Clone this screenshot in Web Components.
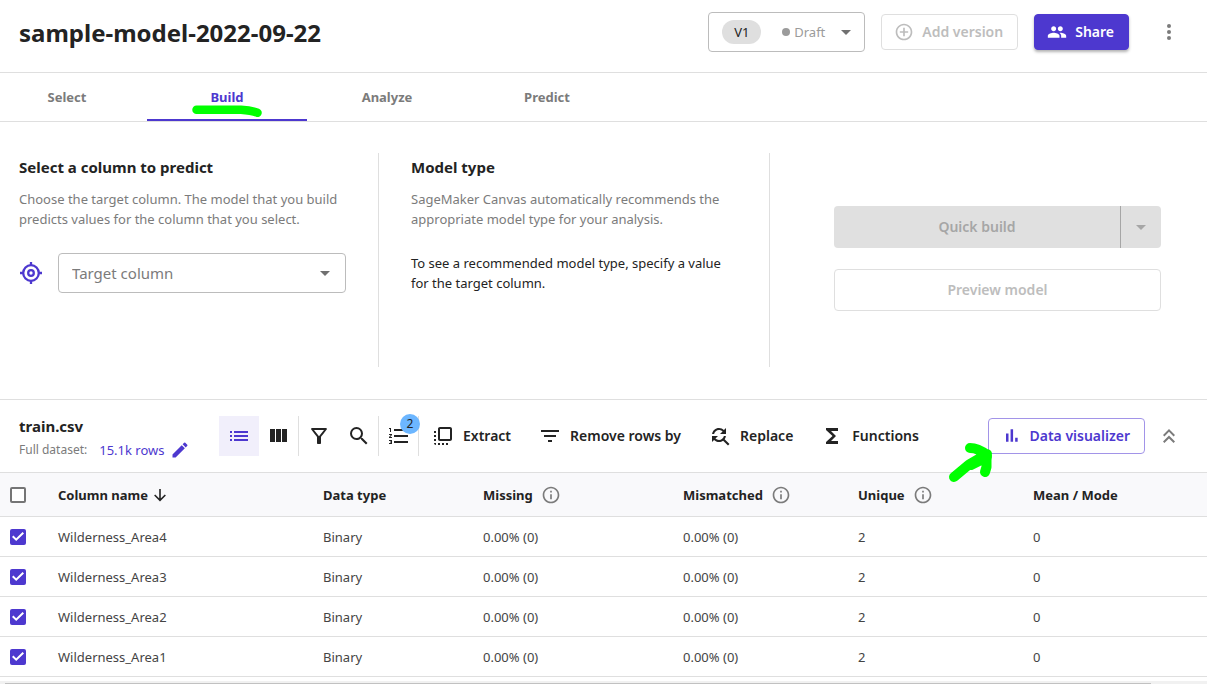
<!DOCTYPE html>
<html lang="en">
<head>
<meta charset="utf-8">
<meta name="viewport" content="width=device-width, initial-scale=1">
<title>sample-model-2022-09-22</title>
<style>
  body {
    margin: 0;
    background: #fff;
    color: #232323;
    font: 400 13px/20px "Noto Sans", "Open Sans", sans-serif;
    --accent: #4d38cf;
    --ink: #232323;
    --muted: #7b7b7b;
    --line: #dfdfdf;
  }
</style>
</head>
<body>
<canvas-app></canvas-app>

<script>
const define = (name, html, setup) => {
  const template = document.createElement('template');
  template.innerHTML = html;
  customElements.define(name, class extends HTMLElement {
    constructor() {
      super();
      this.attachShadow({ mode: 'open' }).append(template.content.cloneNode(true));
    }
    connectedCallback() {
      if (setup && !this.ready) { this.ready = true; setup(this, this.shadowRoot); }
    }
  });
};

const ICONS = {
  people: '<path d="M16 11c1.66 0 2.99-1.34 2.99-3S17.66 5 16 5s-3 1.34-3 3 1.34 3 3 3zm-8 0c1.66 0 2.99-1.34 2.99-3S9.66 5 8 5 5 6.34 5 8s1.34 3 3 3zm0 2c-2.33 0-7 1.17-7 3.5V19h14v-2.5c0-2.33-4.67-3.5-7-3.5zm8 0c-.29 0-.62.02-.97.05 1.16.84 1.97 1.97 1.97 3.45V19h6v-2.5c0-2.33-4.67-3.5-7-3.5z"/>',
  add: '<path d="M13 7h-2v4H7v2h4v4h2v-4h4v-2h-4V7zm-1-5C6.48 2 2 6.48 2 12s4.48 10 10 10 10-4.48 10-10S17.52 2 12 2zm0 18c-4.41 0-8-3.59-8-8s3.59-8 8-8 8 3.59 8 8-3.59 8-8 8z"/>',
  more: '<circle cx="12" cy="6" r="2"/><circle cx="12" cy="12" r="2"/><circle cx="12" cy="18" r="2"/>',
  caret: '<path d="M7 10l5 5 5-5z"/>',
  target: '<g fill="none" stroke="currentColor" stroke-width="2.3"><circle cx="12" cy="12" r="7.8"/><circle cx="12" cy="12" r="2.8"/><path d="M12 1v3M12 20v3M1 12h3M20 12h3"/></g>',
  edit: '<path d="M3 17.25V21h3.75L17.81 9.94l-3.75-3.75L3 17.25zM20.71 7.04a1 1 0 0 0 0-1.41l-2.34-2.34a1 1 0 0 0-1.41 0l-1.83 1.83 3.75 3.75 1.83-1.83z"/>',
  list: '<path d="M3 7h2v2H3zM3 11h2v2H3zM3 15h2v2H3zM7 7h14v2H7zM7 11h14v2H7zM7 15h14v2H7z"/>',
  columns: '<path d="M3 5h5v13H3zM9 5h5v13H9zM15 5h5v13h-5z"/>',
  filter: '<path d="M7 6h10l-5.01 6.3L7 6zm-2.75-.39C6.27 8.2 10 13 10 13v6c0 .55.45 1 1 1h2c.55 0 1-.45 1-1v-6s3.72-4.8 5.74-7.39c.51-.66.04-1.61-.79-1.61H5.04c-.83 0-1.3.95-.79 1.61z"/>',
  search: '<path d="M15.5 14h-.79l-.28-.27A6.47 6.47 0 0 0 16 9.5 6.5 6.5 0 1 0 9.5 16c1.61 0 3.09-.59 4.23-1.57l.27.28v.79l5 4.99L20.49 19l-4.99-5zm-6 0C7.01 14 5 11.99 5 9.5S7.01 5 9.5 5 14 7.01 14 9.5 11.99 14 9.5 14z"/>',
  numbered: '<path d="M2 17h2v.5H3v1h1v.5H2v1h3v-4H2v1zm1-9h1V4H2v1h1v3zm-1 3h1.8L2 13.1v.9h3v-1H3.2L5 10.9V10H2v1zm5-6v2h14V5H7zm0 14h14v-2H7v2zm0-6h14v-2H7v2z"/>',
  extract: '<path d="M3 13h2v-2H3v2zm0 4h2v-2H3v2zm2 4v-2H3c0 1.1.89 2 2 2zM3 9h2V7H3v2zm12 12h2v-2h-2v2zm4-18H9c-1.11 0-2 .9-2 2v10c0 1.1.89 2 2 2h10c1.1 0 2-.9 2-2V5c0-1.1-.9-2-2-2zm0 12H9V5h10v10zm-8 6h2v-2h-2v2zm-4 0h2v-2H7v2z"/>',
  rows: '<path d="M10 18h4v-2h-4v2zM3 6v2h18V6H3zm3 7h12v-2H6v2z"/>',
  replace: '<path d="M11 6c1.38 0 2.63.56 3.54 1.46L12 10h6V4l-2.05 2.05C14.68 4.78 12.93 4 11 4c-3.53 0-6.43 2.61-6.92 6H6.1c.46-2.28 2.48-4 4.9-4zm5.64 9.14c.66-.9 1.12-1.97 1.28-3.14H15.9c-.46 2.28-2.48 4-4.9 4-1.38 0-2.63-.56-3.54-1.46L10 12H4v6l2.05-2.05C7.32 17.22 9.07 18 11 18c1.55 0 2.98-.51 4.14-1.36L20 21.49 21.49 20l-4.85-4.86z"/>',
  sigma: '<path d="M18 4H6v2l6.5 6L6 18v2h12v-3h-7l5-5-5-5h7z"/>',
  bars: '<path d="M6 9h3v10H6zM11.500 4h3v15h-3zM17 14h3v5h-3z"/>',
  collapse: '<path d="M6 17.59 7.41 19 12 14.42 16.59 19 18 17.59l-6-6zM6 11l1.41 1.41L12 7.83l4.59 4.58L18 11l-6-6z"/>',
  info: '<path d="M11 7h2v2h-2zm0 4h2v6h-2zm1-9C6.48 2 2 6.48 2 12s4.48 10 10 10 10-4.48 10-10S17.52 2 12 2zm0 18c-4.41 0-8-3.59-8-8s3.59-8 8-8 8 3.59 8 8-3.59 8-8 8z"/>',
  down: '<path fill="none" stroke="currentColor" stroke-width="2.4" d="M12 3v17M4 12l8 8 8-8"/>'
};

define('ui-icon', `
  <style>
    :host { display: inline-flex; flex: none; width: 24px; height: 24px; }
    :host([size="small"]) { width: 20px; height: 20px; }
    :host([size="tiny"]) { width: 16px; height: 16px; }
    svg { width: 100%; height: 100%; fill: currentColor; }
  </style>
  <svg viewBox="0 0 24 24" aria-hidden="true"></svg>`,
  (el, root) => { root.querySelector('svg').innerHTML = ICONS[el.getAttribute('name')]; });

define('ui-button', `
  <style>
    :host { display: block; flex: none; }
    button {
      box-sizing: border-box; width: 100%; height: 36px; margin: 0; padding: 0 14px 0 12px;
      display: flex; align-items: center; justify-content: center; gap: 8px;
      border: 1px solid var(--line); border-radius: 4px; background: none;
      color: inherit; font: 600 14px/20px "Noto Sans", "Open Sans", sans-serif; white-space: nowrap;
    }
    :host([variant="primary"]) button {
      background: var(--accent); border-color: var(--accent); color: #fff;
      box-shadow: 0 2px 3px rgba(0, 0, 0, .3);
    }
    :host([variant="outlined"]) button { border-color: #a294e8; color: var(--accent); }
    :host([variant="text"]) button { border: 0; padding: 0; color: var(--ink); }
    :host([variant="icon"]) button { border: 0; padding: 0; width: 24px; height: 24px; color: var(--muted); }
    :host([block]) button { height: 42px; padding: 0 16px; }
    button:disabled { color: #bdbdbd; }
  </style>
  <button type="button"><slot></slot></button>`,
  (el, root) => {
    const b = root.querySelector('button');
    b.disabled = el.hasAttribute('disabled');
    if (el.hasAttribute('label')) b.setAttribute('aria-label', el.getAttribute('label'));
  });

define('version-picker', `
  <style>
    :host { display: block; flex: none; }
    button {
      box-sizing: border-box; width: 157px; height: 40px; padding: 0 6px 0 13px; display: flex; align-items: center;
      border: 1px solid #bcbcbc; border-radius: 4px; background: #fff;
      color: #9b9b9b; font: 400 13px/20px "Noto Sans", "Open Sans", sans-serif;
    }
    .chip { width: 39px; border-radius: 12px; background: #dfdfdf; color: var(--ink); line-height: 24px; text-align: center; }
    .dot { width: 8px; height: 8px; margin: 0 4px 0 21px; border-radius: 50%; background: #9b9b9b; }
    ui-icon { margin-left: auto; color: #707070; }
  </style>
  <button type="button" aria-haspopup="listbox">
    <span class="chip">V1</span><span class="dot"></span><span>Draft</span><ui-icon name="caret"></ui-icon>
  </button>`);

define('app-header', `
  <style>
    :host { display: block; border-bottom: 1px solid var(--line); }
    header { display: flex; align-items: center; gap: 16px; padding: 12px 26px 20px 19px; }
    h1 { flex: 1; margin: 0; padding-top: 2px; font-size: 24px; line-height: 38px; font-weight: 700; }
    .more { margin-left: 12px; }
  </style>
  <header>
    <h1><slot></slot></h1>
    <version-picker></version-picker>
    <ui-button disabled><ui-icon name="add" size="small"></ui-icon>Add version</ui-button>
    <ui-button variant="primary"><ui-icon name="people" size="small"></ui-icon>Share</ui-button>
    <ui-button class="more" variant="icon" label="More options"><ui-icon name="more"></ui-icon></ui-button>
  </header>`);

define('step-tabs', `
  <style>
    :host { display: block; border-bottom: 1px solid var(--line); }
    nav { display: flex; }
    a {
      position: relative; box-sizing: border-box; width: 160px; height: 48px;
      border-bottom: 2px solid transparent;
      color: var(--muted); font-weight: 700; line-height: 48px; text-align: center; text-decoration: none;
    }
    a:first-child { width: 147px; padding-right: 13px; }
    a[aria-current] { color: var(--accent); border-color: var(--accent); }
    svg { position: absolute; left: 44px; top: 30px; width: 72px; height: 16px; }
  </style>
  <nav aria-label="Model steps">
    <a href="#select">Select</a>
    <a href="#build" aria-current="step">Build<svg viewBox="0 0 72 16" fill="none" stroke="#0f0" stroke-linecap="round" stroke-linejoin="round" stroke-width="8.500" aria-hidden="true"><path d="M5.500 6.700H50Q60 7.300 66.500 9.800"/></svg></a>
    <a href="#analyze">Analyze</a>
    <a href="#predict">Predict</a>
  </nav>`);

define('config-section', `
  <style>
    :host { display: block; box-sizing: border-box; min-height: 214px; padding: 4px 32px 0; border-right: 1px solid var(--line); }
    :host([first]) { padding-left: 19px; }
    h2 { margin: 0 0 12px; font-size: 15px; line-height: 20px; font-weight: 700; }
    p { margin: 0 0 24px; color: var(--muted); }
  </style>
  <h2><slot name="title"></slot></h2>
  <p><slot name="hint"></slot></p>
  <slot></slot>`);

define('target-select', `
  <style>
    :host { display: flex; align-items: center; gap: 15px; }
    label { display: flex; color: var(--accent); }
    .field { position: relative; flex: 1; display: flex; }
    select {
      appearance: none; box-sizing: border-box; width: 100%; height: 40px; padding: 0 40px 0 13px;
      border: 1px solid #bcbcbc; border-radius: 4px; background: #fff;
      color: var(--muted); font: 400 15px/20px "Noto Sans", "Open Sans", sans-serif;
    }
    .caret { position: absolute; right: 9px; top: 8px; color: #707070; pointer-events: none; }
  </style>
  <label for="target" aria-label="Target column"><ui-icon name="target"></ui-icon></label>
  <div class="field">
    <select id="target"><option>Target column</option></select>
    <ui-icon class="caret" name="caret"></ui-icon>
  </div>`);

define('build-actions', `
  <style>
    :host { display: flex; flex-direction: column; gap: 21px; padding: 53px 46px 0 64px; }
    .split { display: flex; }
    .split button {
      height: 42px; padding: 0; border: 0; background: #e0e0e0; color: #a6a6a6;
      font: 600 14px/20px "Noto Sans", "Open Sans", sans-serif;
    }
    .main { flex: 1; border-radius: 4px 0 0 4px; }
    .split .menu { width: 41px; display: grid; place-items: center; border-left: 1px solid #a6a6a6; border-radius: 0 4px 4px 0; }
  </style>
  <div class="split">
    <button class="main" type="button" disabled>Quick build</button>
    <button class="menu" type="button" disabled aria-label="Build options"><ui-icon name="caret"></ui-icon></button>
  </div>
  <ui-button block disabled>Preview model</ui-button>`);

define('build-config', `
  <style>
    :host { display: grid; grid-template-columns: 379fr 391fr 437fr; padding: 31px 0 32px; border-bottom: 1px solid var(--line); }
    .note { color: var(--ink); }
  </style>
  <config-section first>
    <span slot="title">Select a column to predict</span>
    <span slot="hint">Choose the target column. The model that you build predicts values for the column that you select.</span>
    <target-select></target-select>
  </config-section>
  <config-section>
    <span slot="title">Model type</span>
    <span slot="hint">SageMaker Canvas automatically recommends the appropriate model type for your analysis.</span>
    <span class="note">To see a recommended model type, specify a value for the target column.</span>
  </config-section>
  <build-actions></build-actions>`);

define('data-toolbar', `
  <style>
    :host { display: flex; align-items: center; height: 72px; padding: 0 26px 0 19px; border-bottom: 1px solid var(--line); }
    .dataset { width: 200px; padding-top: 4px; }
    h2 { margin: 0 0 4px; font-size: 15px; line-height: 20px; font-weight: 700; }
    .size { display: flex; align-items: center; color: var(--muted); font-size: 12px; }
    .size a { display: flex; align-items: center; gap: 6px; margin-left: 12px; color: var(--accent); font-size: 13px; text-decoration: none; }
    .tools { display: flex; }
    .tools button {
      position: relative; box-sizing: border-box; width: 40px; height: 40px; padding: 0;
      display: grid; place-items: center; border: 0; background: none; color: var(--ink);
    }
    .tools .end { border-right: 1px solid var(--line); }
    .tools .on { background: #f1effb; color: var(--accent); }
    .badge {
      position: absolute; right: -2px; top: -2px; width: 20px; height: 20px; border-radius: 50%;
      background: #6cb6ff; color: var(--ink); font: 400 12px/20px "Noto Sans", "Open Sans", sans-serif; text-align: center;
    }
    .actions { display: flex; gap: 27px; margin-left: 12px; }
    .right { display: flex; align-items: center; gap: 12px; margin-left: auto; }
    .visual { position: relative; }
    .visual svg { position: absolute; left: -43px; top: 22px; width: 52px; height: 48px; pointer-events: none; }
  </style>
  <div class="dataset">
    <h2>train.csv</h2>
    <div class="size">Full dataset: <a href="#rows">15.1k rows<ui-icon name="edit" size="small"></ui-icon></a></div>
  </div>
  <div class="tools">
    <button class="on" type="button" aria-label="List view"><ui-icon name="list"></ui-icon></button>
    <button class="end" type="button" aria-label="Grid view"><ui-icon name="columns"></ui-icon></button>
    <button type="button" aria-label="Filter"><ui-icon name="filter"></ui-icon></button>
    <button class="end" type="button" aria-label="Search"><ui-icon name="search"></ui-icon></button>
    <button class="end" type="button" aria-label="Model recipe"><ui-icon name="numbered"></ui-icon><span class="badge">2</span></button>
  </div>
  <div class="actions">
    <ui-button variant="text"><ui-icon name="extract"></ui-icon>Extract</ui-button>
    <ui-button variant="text"><ui-icon name="rows"></ui-icon>Remove rows by</ui-button>
    <ui-button variant="text"><ui-icon name="replace"></ui-icon>Replace</ui-button>
    <ui-button variant="text"><ui-icon name="sigma"></ui-icon>Functions</ui-button>
  </div>
  <div class="right">
    <div class="visual">
      <ui-button variant="outlined"><ui-icon name="bars" size="small"></ui-icon>Data visualizer</ui-button>
      <svg viewBox="0 0 52 48" fill="none" stroke="#0f0" stroke-linecap="round" stroke-linejoin="round" stroke-width="10" aria-hidden="true"><path d="M9 37L24 24.500M24 24.500L42 14M25 8Q33 8 42 15L41.500 20V27L40 32M26 25L42 17"/></svg>
    </div>
    <ui-button variant="icon" label="Collapse"><ui-icon name="collapse"></ui-icon></ui-button>
  </div>`);

define('column-table', `
  <style>
    :host { display: block; }
    table { width: 100%; table-layout: fixed; border-collapse: separate; border-spacing: 0; }
    .c1 { width: 58px; } .c2 { width: 265px; } .c3 { width: 160px; } .c4 { width: 200px; } .c5, .c6 { width: 175px; } .c7 { width: 174px; }
    th, td { box-sizing: border-box; height: 40px; padding: 0; border-bottom: 1px solid var(--line); text-align: left; font-weight: 400; }
    thead th { height: 44px; background: #f9f9fb; font-weight: 700; }
    tbody th, td { color: #444; }
    th span { display: flex; align-items: center; gap: 8px; }
    th .sorted { gap: 4px; }
    th ui-icon { color: var(--muted); }
    .sorted ui-icon { color: var(--ink); }
    input {
      appearance: none; display: grid; place-items: center; box-sizing: border-box;
      width: 16px; height: 16px; margin: 0 0 0 10px; border: 2px solid #757575; border-radius: 2px; background: #fff;
    }
    input:checked { border: 0; background: var(--accent); }
    input:checked::before {
      content: ""; width: 12px; height: 10px; background: #fff;
      clip-path: polygon(0 54%, 12% 40%, 35% 67%, 88% 6%, 100% 20%, 35% 95%);
    }
  </style>
  <table>
    <colgroup><col class="c1"><col class="c2"><col class="c3"><col class="c4"><col class="c5"><col class="c6"><col class="c7"></colgroup>
    <thead><tr>
      <th scope="col"><input type="checkbox" aria-label="Select all columns"></th>
      <th scope="col"><span class="sorted">Column name<ui-icon name="down" size="tiny"></ui-icon></span></th>
      <th scope="col">Data type</th>
      <th scope="col"><span>Missing<ui-icon name="info" size="small"></ui-icon></span></th>
      <th scope="col"><span>Mismatched<ui-icon name="info" size="small"></ui-icon></span></th>
      <th scope="col"><span>Unique<ui-icon name="info" size="small"></ui-icon></span></th>
      <th scope="col">Mean / Mode</th>
    </tr></thead>
    <tbody></tbody>
  </table>`,
  (el, root) => {
    root.querySelector('tbody').innerHTML = el.getAttribute('columns').split(' ').map(name => `
      <tr>
        <td><input type="checkbox" checked aria-label="${name}"></td>
        <th scope="row">${name}</th><td>Binary</td><td>0.00% (0)</td><td>0.00% (0)</td><td>2</td><td>0</td>
      </tr>`).join('');
  });

define('scroll-strip', `
  <style>
    :host { display: block; margin-top: 4px; padding: 2px 56px 0 5px; background: #f1f1f1; }
    div { height: 1px; background: #c1c1c1; }
  </style>
  <div></div>`);

define('canvas-app', `
  <style>:host { display: block; }</style>
  <app-header>sample-model-2022-09-22</app-header>
  <step-tabs></step-tabs>
  <main>
    <build-config></build-config>
    <data-toolbar></data-toolbar>
    <column-table columns="Wilderness_Area4 Wilderness_Area3 Wilderness_Area2 Wilderness_Area1"></column-table>
    <scroll-strip></scroll-strip>
  </main>`);
</script>
</body>
</html>
